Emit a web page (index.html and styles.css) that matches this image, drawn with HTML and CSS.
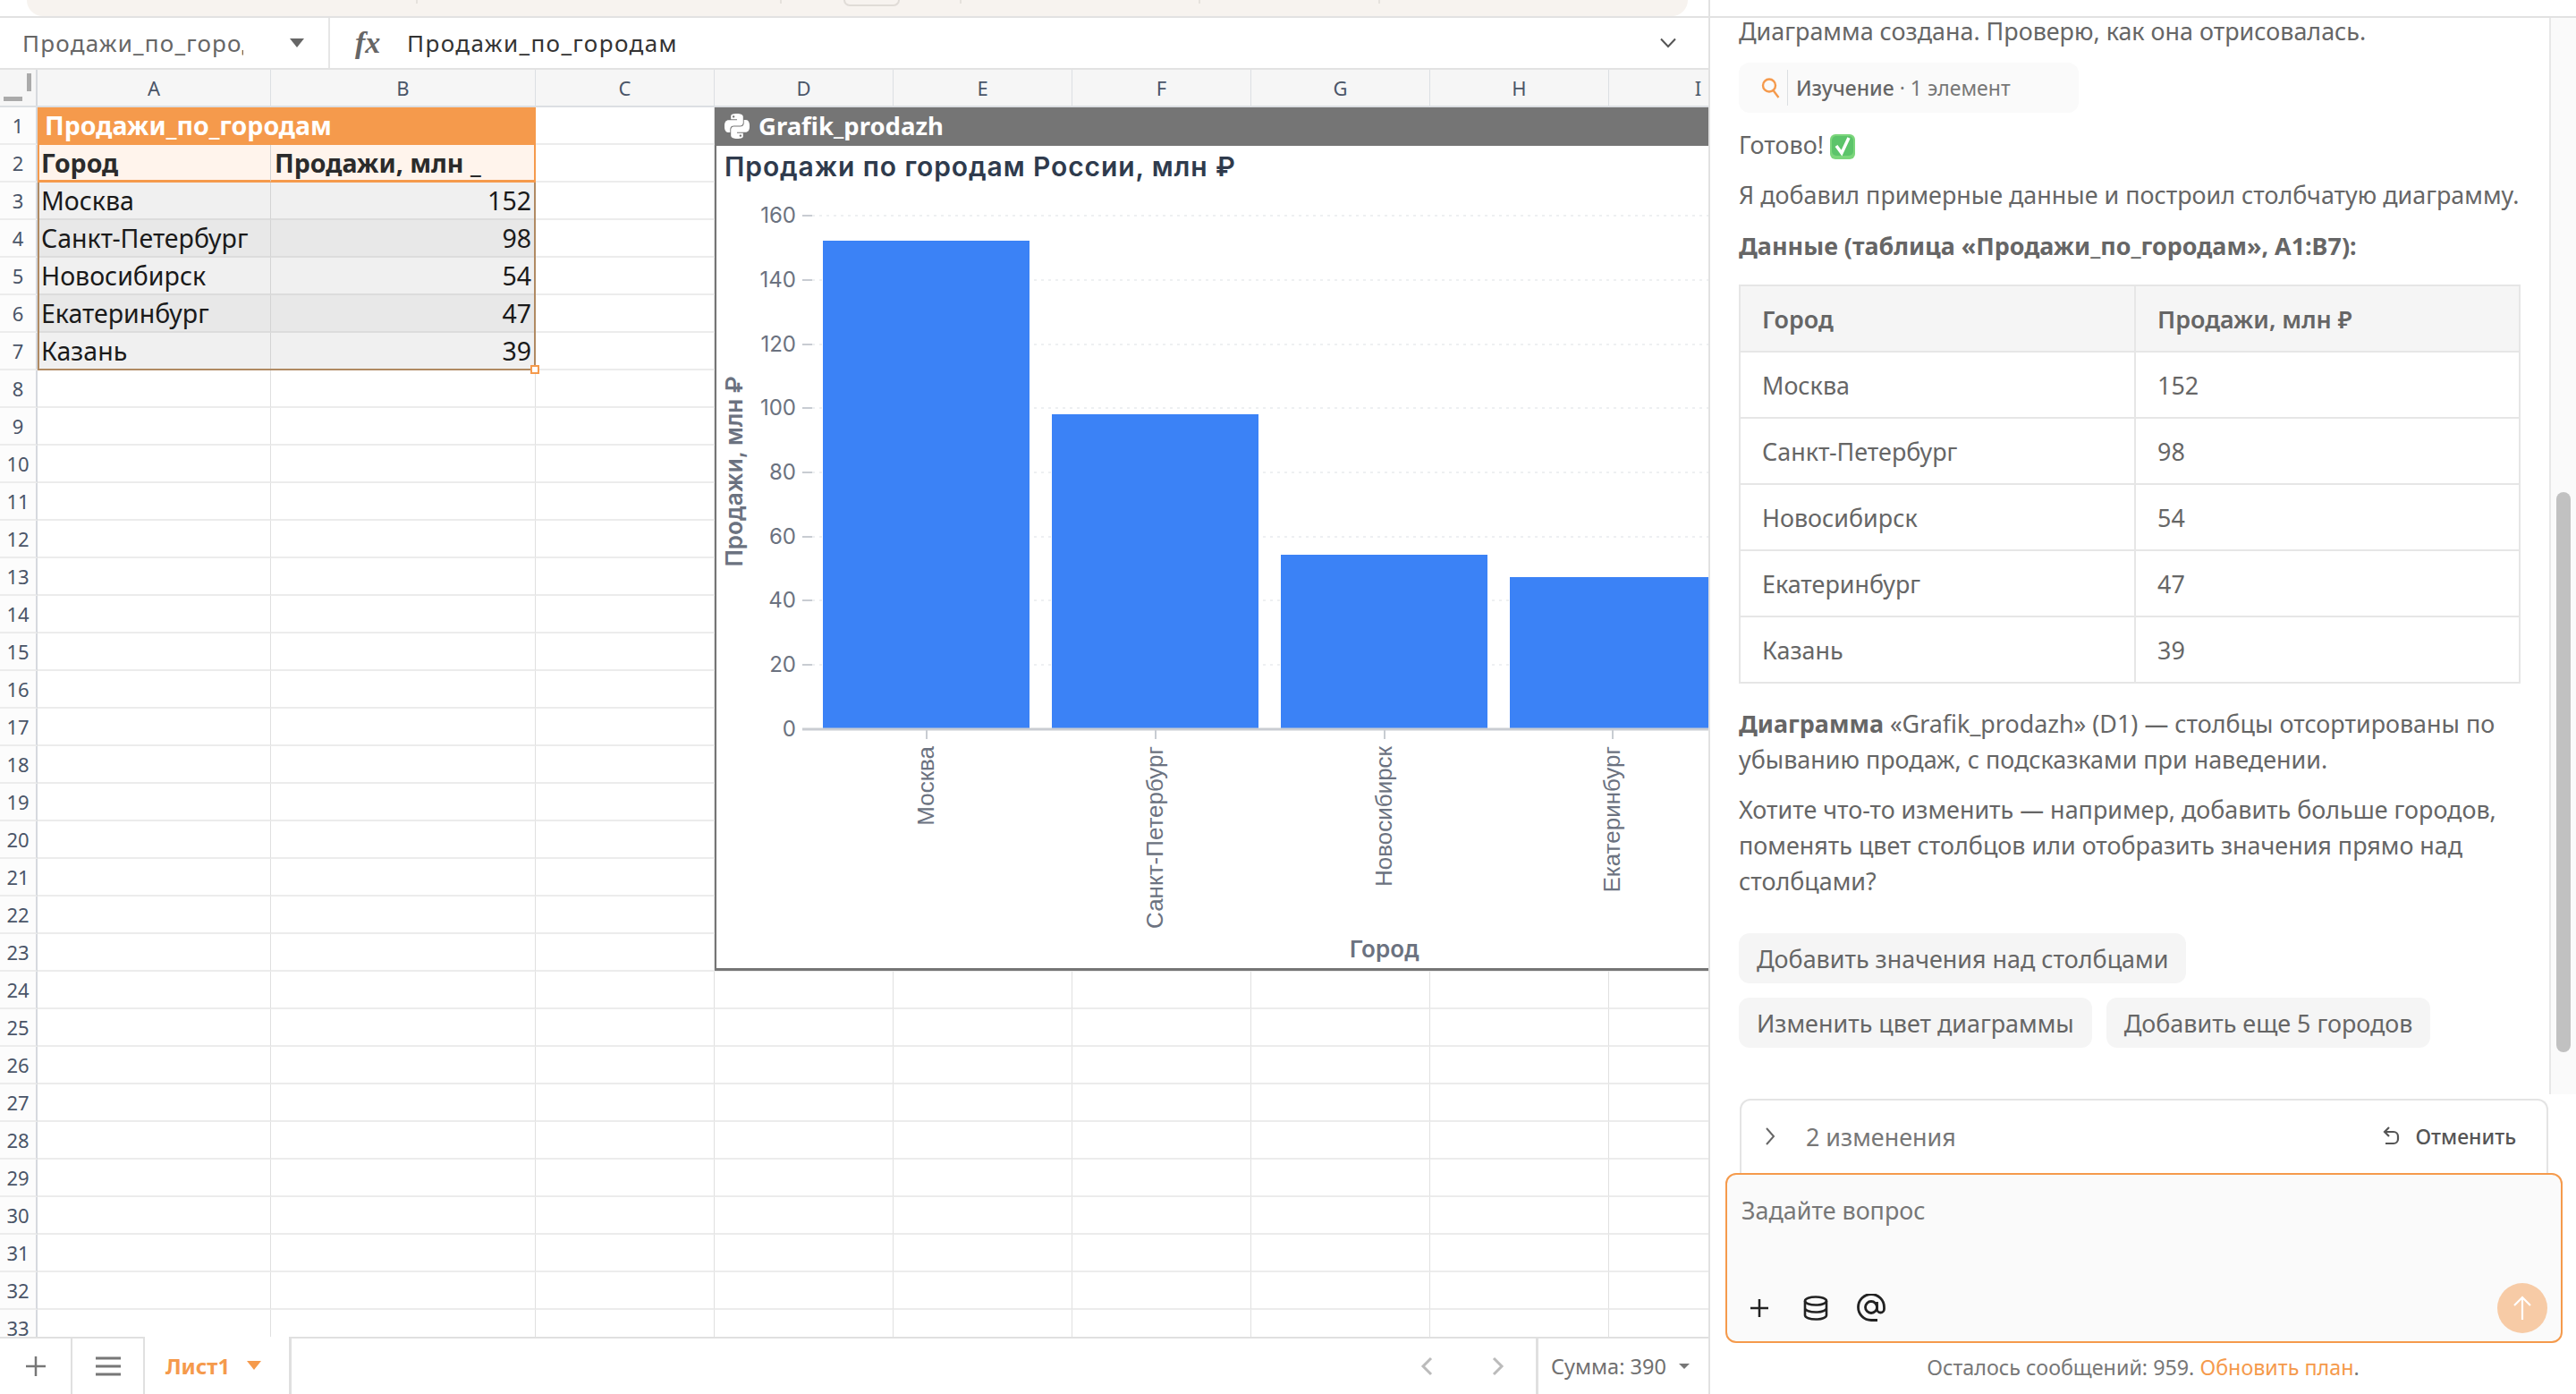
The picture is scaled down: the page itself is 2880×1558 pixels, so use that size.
FILE: index.html
```html
<!DOCTYPE html>
<html lang="ru">
<head>
<meta charset="utf-8">
<title>Продажи по городам</title>
<link rel="stylesheet" href="styles.css">
</head>
<body>
<div class="app">
  <main class="sheet">
    <div class="topband">
      <div class="strip">
        <div class="tick t1"></div>
        <div class="tick t2"></div>
        <div class="tick t3"><span class="stub"></span></div>
        <div class="tick t4"></div>
        <div class="tick t5"></div>
        <div class="tick t6"></div>
      </div>
    </div>
    <div class="formula">
      <div class="namebox">
        <span class="nametext">Продажи_по_городам</span>
        <span class="caret"></span>
      </div>
      <div class="fxbar">
        <span class="fx">fx</span>
        <span class="fxtext">Продажи_по_городам</span>
        <svg class="fxchev" viewBox="0 0 20 12" width="20" height="12"><path d="M2 1.500 10 10l8-8.500" fill="none" stroke="#555" stroke-width="2"/></svg>
      </div>
    </div>
    <div class="colhead">
      <div class="corner"><span class="cbar-h"></span><span class="cbar-v"></span></div>
      <div class="ch">A</div><div class="ch">B</div><div class="ch">C</div><div class="ch">D</div><div class="ch">E</div><div class="ch">F</div><div class="ch">G</div><div class="ch">H</div><div class="ch">I</div>
    </div>
    <div class="gridwrap">
      <div class="row"><div class="rh">1</div><div class="c title">Продажи_по_городам</div><i></i><i></i><i></i><i></i><i></i><i></i><i></i></div>
      <div class="row"><div class="rh">2</div><div class="c thead">Город</div><div class="c thead">Продажи, млн _</div><i></i><i></i><i></i><i></i><i></i><i></i><i></i></div>
      <div class="row"><div class="rh">3</div><div class="c odd">Москва</div><div class="c odd num">152</div><i></i><i></i><i></i><i></i><i></i><i></i><i></i></div>
      <div class="row"><div class="rh">4</div><div class="c even">Санкт-Петербург</div><div class="c even num">98</div><i></i><i></i><i></i><i></i><i></i><i></i><i></i></div>
      <div class="row"><div class="rh">5</div><div class="c odd">Новосибирск</div><div class="c odd num">54</div><i></i><i></i><i></i><i></i><i></i><i></i><i></i></div>
      <div class="row"><div class="rh">6</div><div class="c even">Екатеринбург</div><div class="c even num">47</div><i></i><i></i><i></i><i></i><i></i><i></i><i></i></div>
      <div class="row"><div class="rh">7</div><div class="c odd">Казань</div><div class="c odd num">39</div><i></i><i></i><i></i><i></i><i></i><i></i><i></i></div>
      <div class="row"><div class="rh">8</div><i></i><i></i><i></i><i></i><i></i><i></i><i></i><i></i><i></i></div>
      <div class="row"><div class="rh">9</div><i></i><i></i><i></i><i></i><i></i><i></i><i></i><i></i><i></i></div>
      <div class="row"><div class="rh">10</div><i></i><i></i><i></i><i></i><i></i><i></i><i></i><i></i><i></i></div>
      <div class="row"><div class="rh">11</div><i></i><i></i><i></i><i></i><i></i><i></i><i></i><i></i><i></i></div>
      <div class="row"><div class="rh">12</div><i></i><i></i><i></i><i></i><i></i><i></i><i></i><i></i><i></i></div>
      <div class="row"><div class="rh">13</div><i></i><i></i><i></i><i></i><i></i><i></i><i></i><i></i><i></i></div>
      <div class="row"><div class="rh">14</div><i></i><i></i><i></i><i></i><i></i><i></i><i></i><i></i><i></i></div>
      <div class="row"><div class="rh">15</div><i></i><i></i><i></i><i></i><i></i><i></i><i></i><i></i><i></i></div>
      <div class="row"><div class="rh">16</div><i></i><i></i><i></i><i></i><i></i><i></i><i></i><i></i><i></i></div>
      <div class="row"><div class="rh">17</div><i></i><i></i><i></i><i></i><i></i><i></i><i></i><i></i><i></i></div>
      <div class="row"><div class="rh">18</div><i></i><i></i><i></i><i></i><i></i><i></i><i></i><i></i><i></i></div>
      <div class="row"><div class="rh">19</div><i></i><i></i><i></i><i></i><i></i><i></i><i></i><i></i><i></i></div>
      <div class="row"><div class="rh">20</div><i></i><i></i><i></i><i></i><i></i><i></i><i></i><i></i><i></i></div>
      <div class="row"><div class="rh">21</div><i></i><i></i><i></i><i></i><i></i><i></i><i></i><i></i><i></i></div>
      <div class="row"><div class="rh">22</div><i></i><i></i><i></i><i></i><i></i><i></i><i></i><i></i><i></i></div>
      <div class="row"><div class="rh">23</div><i></i><i></i><i></i><i></i><i></i><i></i><i></i><i></i><i></i></div>
      <div class="row"><div class="rh">24</div><i></i><i></i><i></i><i></i><i></i><i></i><i></i><i></i><i></i></div>
      <div class="row"><div class="rh">25</div><i></i><i></i><i></i><i></i><i></i><i></i><i></i><i></i><i></i></div>
      <div class="row"><div class="rh">26</div><i></i><i></i><i></i><i></i><i></i><i></i><i></i><i></i><i></i></div>
      <div class="row"><div class="rh">27</div><i></i><i></i><i></i><i></i><i></i><i></i><i></i><i></i><i></i></div>
      <div class="row"><div class="rh">28</div><i></i><i></i><i></i><i></i><i></i><i></i><i></i><i></i><i></i></div>
      <div class="row"><div class="rh">29</div><i></i><i></i><i></i><i></i><i></i><i></i><i></i><i></i><i></i></div>
      <div class="row"><div class="rh">30</div><i></i><i></i><i></i><i></i><i></i><i></i><i></i><i></i><i></i></div>
      <div class="row"><div class="rh">31</div><i></i><i></i><i></i><i></i><i></i><i></i><i></i><i></i><i></i></div>
      <div class="row"><div class="rh">32</div><i></i><i></i><i></i><i></i><i></i><i></i><i></i><i></i><i></i></div>
      <div class="row"><div class="rh">33</div><i></i><i></i><i></i><i></i><i></i><i></i><i></i><i></i><i></i></div>

      <div class="selection"><span class="handle"></span></div>

      <section class="chart">
        <header class="chart-head">
          <svg viewBox="0 0 24 24" width="28" height="28"><path fill="#fff" d="M14.25.18l.9.2.73.26.59.3.45.32.34.34.25.34.16.33.1.3.04.26.02.2-.01.13V8.5l-.05.63-.13.55-.21.46-.26.38-.3.31-.33.25-.35.19-.35.14-.33.1-.3.07-.26.04-.21.02H8.77l-.69.05-.59.14-.5.22-.41.27-.33.32-.27.35-.2.36-.15.37-.1.35-.07.32-.04.27-.02.21v3.06H3.17l-.21-.03-.28-.07-.32-.12-.35-.18-.36-.26-.36-.36-.35-.46-.32-.59-.28-.73-.21-.88-.14-1.05-.05-1.23.06-1.22.16-1.04.24-.87.32-.71.36-.57.4-.44.42-.33.42-.24.4-.16.36-.1.32-.05.24-.01h.16l.06.01h8.16v-.83H6.18l-.01-2.75-.02-.37.05-.34.11-.31.17-.28.25-.26.31-.23.38-.2.44-.18.51-.15.58-.12.64-.1.71-.06.77-.04.84-.02 1.27.05zm-6.3 1.98l-.23.33-.08.41.08.41.23.34.33.22.41.09.41-.09.33-.22.23-.34.08-.41-.08-.41-.23-.33-.33-.22-.41-.09-.41.09zm13.09 3.95l.28.06.32.12.35.18.36.27.36.35.35.47.32.59.28.73.21.88.14 1.04.05 1.23-.06 1.23-.16 1.04-.24.86-.32.71-.36.57-.4.45-.42.33-.42.24-.4.16-.36.09-.32.05-.24.02-.16-.01h-8.22v.82h5.84l.01 2.76.02.36-.05.34-.11.31-.17.29-.25.25-.31.24-.38.2-.44.17-.51.15-.58.13-.64.09-.71.07-.77.04-.84.01-1.27-.04-1.07-.14-.9-.2-.73-.25-.59-.3-.45-.33-.34-.34-.25-.34-.16-.33-.1-.3-.04-.25-.02-.2.01-.13v-5.34l.05-.64.13-.54.21-.46.26-.38.3-.32.33-.24.35-.2.35-.14.33-.1.3-.06.26-.04.21-.02.13-.01h5.84l.69-.05.59-.14.5-.21.41-.28.33-.32.27-.35.2-.36.15-.36.1-.35.07-.32.04-.28.02-.21V6.07h2.09l.14.01zm-6.47 14.25l-.23.33-.08.41.08.41.23.33.33.23.41.08.41-.08.33-.23.23-.33.08-.41-.08-.41-.23-.33-.33-.23-.41-.08-.41.08z"/></svg>
          <span>Grafik_prodazh</span>
        </header>
        <svg class="plot" viewBox="801 163 1109 919" width="1109" height="919">
          <text class="ctitle" x="810" y="197">Продажи по городам России, млн ₽</text>
          <g class="grid">
            <path d="M908 241H1910M908 313H1910M908 385H1910M908 456H1910M908 528H1910M908 600H1910M908 671H1910M908 743H1910"/>
          </g>
          <g class="bars">
            <rect x="920" y="269" width="231" height="545"/>
            <rect x="1176" y="463" width="231" height="351"/>
            <rect x="1432" y="620" width="231" height="194"/>
            <rect x="1688" y="645" width="231" height="169"/>
          </g>
          <path class="ticks" d="M897 241H908M897 313H908M897 385H908M897 456H908M897 528H908M897 600H908M897 671H908M897 743H908M1036 816V826M1292 816V826M1548 816V826M1803 816V826"/>
          <path class="axis" d="M897 815H1910"/>
          <g class="ylab">
            <text x="890" y="249">160</text><text x="890" y="321">140</text><text x="890" y="393">120</text><text x="890" y="464">100</text><text x="890" y="536">80</text><text x="890" y="608">60</text><text x="890" y="679">40</text><text x="890" y="751">20</text><text x="890" y="823">0</text>
          </g>
          <g class="xlab">
            <text transform="translate(1044 834) rotate(-90)">Москва</text>
            <text transform="translate(1300 834) rotate(-90)">Санкт-Петербург</text>
            <text transform="translate(1556 834) rotate(-90)">Новосибирск</text>
            <text transform="translate(1811 834) rotate(-90)">Екатеринбург</text>
          </g>
          <text class="atitle" transform="translate(830 527) rotate(-90)">Продажи, млн ₽</text>
          <text class="atitle" x="1548" y="1070">Город</text>
        </svg>
      </section>
    </div>
    <footer class="tabs">
      <div class="tbtn bordered"><svg viewBox="0 0 24 24" width="24" height="24"><path d="M12 1v22M1 12h22" stroke="#777" stroke-width="2.500" fill="none"/></svg></div>
      <div class="tbtn bordered"><svg viewBox="0 0 28 24" width="28" height="24"><path d="M0 3h28M0 12h28M0 21h28" stroke="#777" stroke-width="3" fill="none"/></svg></div>
      <div class="tab"><span>Лист1</span><span class="tcaret"></span></div>
      <div class="tabfill">
        <svg class="pager" viewBox="0 0 14 22" width="14" height="22"><path d="M12 2 3 11l9 9" fill="none" stroke="#bbb" stroke-width="3"/></svg>
        <svg class="pager next" viewBox="0 0 14 22" width="14" height="22"><path d="m2 2 9 9-9 9" fill="none" stroke="#bbb" stroke-width="3"/></svg>
      </div>
      <div class="sum"><span>Сумма: 390</span><span class="scaret"></span></div>
    </footer>
  </main>

  <aside class="panel">
    <div class="ptop"></div>
    <div class="pbody">
      <div class="msgs">
        <p class="m1">Диаграмма создана. Проверю, как она отрисовалась.</p>
        <div class="tool">
          <svg viewBox="0 0 24 24" width="24" height="24"><circle cx="10" cy="9.500" r="7" fill="none" stroke="#f59a4c" stroke-width="2.400"/><path d="m14.500 15 6 8" stroke="#f59a4c" stroke-width="2.400" fill="none"/></svg>
          <span><b>Изучение</b> · 1 элемент</span>
        </div>
        <p class="m2">Готово! <svg class="check" viewBox="0 0 28 28" width="28" height="28"><rect width="28" height="28" rx="6" fill="#7bd67b"/><rect x="2" y="2" width="24" height="22" rx="5" fill="#5cc46a"/><path d="m7 13 6 8 8-17" fill="none" stroke="#fff" stroke-width="3.500"/></svg></p>
        <p class="m2">Я добавил примерные данные и построил столбчатую диаграмму.</p>
        <p class="m3"><strong>Данные (таблица «Продажи_по_городам», A1:B7):</strong></p>
        <table class="dt">
          <thead><tr><th>Город</th><th>Продажи, млн ₽</th></tr></thead>
          <tbody>
            <tr><td>Москва</td><td>152</td></tr>
            <tr><td>Санкт-Петербург</td><td>98</td></tr>
            <tr><td>Новосибирск</td><td>54</td></tr>
            <tr><td>Екатеринбург</td><td>47</td></tr>
            <tr><td>Казань</td><td>39</td></tr>
          </tbody>
        </table>
        <p class="m4"><strong>Диаграмма</strong> «Grafik_prodazh» (D1) — столбцы отсортированы по убыванию продаж, с подсказками при наведении.</p>
        <p class="m2">Хотите что-то изменить — например, добавить больше городов, поменять цвет столбцов или отобразить значения прямо над столбцами?</p>
        <div class="sugg">
          <button class="sg">Добавить значения над столбцами</button>
          <button class="sg">Изменить цвет диаграммы</button>
          <button class="sg">Добавить еще 5 городов</button>
        </div>
      </div>
      <div class="track"><span class="thumb"></span></div>
    </div>
    <div class="changes">
      <svg viewBox="0 0 12 22" width="12" height="22"><path d="m2 2 8 9-8 9" fill="none" stroke="#666" stroke-width="2"/></svg>
      <span class="chcount">2 изменения</span>
      <svg class="undo" viewBox="0 0 20 24" width="20" height="24"><path d="M8 2 3 7l5 5M3 7h10a5 5 0 0 1 5 5v3a5 5 0 0 1-5 5H4" fill="none" stroke="#555" stroke-width="2.200"/></svg>
      <span class="revert">Отменить</span>
    </div>
    <div class="input">
      <div class="ph">Задайте вопрос</div>
      <div class="inbar">
        <svg viewBox="0 0 20 20" width="20" height="20"><path d="M10 0v20M0 10h20" stroke="#222" stroke-width="2.500" fill="none"/></svg>
        <svg class="db" viewBox="0 0 28 28" width="28" height="28"><g fill="none" stroke="#222" stroke-width="2.600"><ellipse cx="14" cy="6" rx="12" ry="4.500"/><path d="M2 6v16c0 2.500 5.400 4.500 12 4.500S26 24.500 26 22V6M2 14c0 2.500 5.400 4.500 12 4.500S26 16.500 26 14"/></g></svg>
        <svg class="at" viewBox="0 0 32 32" width="32" height="32"><g fill="none" stroke="#222" stroke-width="2.800"><circle cx="16" cy="15" r="6.500"/><path d="M22.500 9v8a4 4 0 0 0 8 0v-2A14.500 14.500 0 1 0 16 29.500h7"/></g></svg>
        <span class="send"><svg viewBox="0 0 24 28" width="24" height="28"><path d="M12 27V2M3 11l9-9 9 9" fill="none" stroke="#fff" stroke-width="2.200"/></svg></span>
      </div>
    </div>
    <div class="quota">Осталось сообщений: 959. <a>Обновить план</a>.</div>
  </aside>
</div>
</body>
</html>
```

FILE: styles.css
```css
* { box-sizing: border-box; }
html, body { margin: 0; padding: 0; height: 100%; background: #fff; overflow: hidden; }
.app { display: flex; width: 2880px; height: 1558px; font-family: "Noto Sans", sans-serif; }

.sheet { width: 1910px; display: flex; flex-direction: column; flex: none; position: relative; }

.topband { height: 20px; border-bottom: 2px solid #e2e2e2; padding: 0 23px 0 30px; flex: none; }
.strip { height: 18px; background: #f7f3ef; border-radius: 0 0 40px 40px; display: grid; grid-template-columns: 435px 407px 201px 267px 201px 203px 1fr; }
.tick { height: 4px; border-left: 2px solid #e6e2dd; }
.t1 { border-left: 0; }
.stub { display: block; margin-left: 69px; width: 63px; height: 7px; border: 2px solid #e0dcd7; border-top: 0; border-radius: 0 0 8px 8px; }

.formula { height: 58px; border-bottom: 2px solid #e2e2e2; display: flex; flex: none; }
.namebox { width: 369px; border-right: 2px solid #e6e6e6; display: flex; align-items: center; padding-left: 25px; flex: none; }
.nametext { width: 247px; overflow: hidden; white-space: nowrap; font-size: 26px; color: #666; letter-spacing: 1.200px; }
.caret { margin-left: 52px; border: 8px solid transparent; border-top: 10px solid #666; border-bottom: 0; }
.fxbar { flex: 1; display: flex; align-items: center; padding-left: 28px; }
.fx { font-family: "Liberation Serif", serif; font-style: italic; font-weight: 700; font-size: 34px; color: #666; width: 58px; }
.fxtext { font-size: 26px; color: #333; letter-spacing: 1.400px; }
.fxchev { margin-left: auto; margin-right: 35px; }

.colhead, .row { display: grid; grid-template-columns: 42px 261px 296px repeat(7, 200px); flex: none; }
.colhead { height: 42px; background: #f6f6f6; border-bottom: 2px solid #dcdfe3; }
.corner { position: relative; border-right: 2px solid #d6d9de; display: block; }
.cbar-h { position: absolute; left: 4px; top: 30px; width: 21px; height: 5px; background: #aaa; }
.cbar-v { position: absolute; left: 30px; top: 4px; width: 5px; height: 20px; background: #aaa; }
.ch { display: flex; align-items: center; justify-content: center; font-size: 22px; color: #4a5568; border-right: 1px solid #dcdfe3; }

.gridwrap { flex: 1; position: relative; overflow: hidden; min-height: 0; }
.row { height: 42px; }
.row > i { display: block; border-right: 1px solid #e0e0e0; border-bottom: 2px solid #ececec; }
.rh { display: flex; align-items: center; justify-content: center; font-size: 22px; color: #4a5568; border-right: 2px solid #d6d9de; border-bottom: 2px solid #ececec; background: #fcfcfc; }
.c { display: flex; align-items: center; padding: 0 4px; font-size: 28.500px; color: #1a1a1a; white-space: nowrap; border-right: 1px solid #d4d4d4; border-bottom: 2px solid #dcdcdc; }
.title { grid-column: span 2; background: #f59a4c; color: #fff; font-weight: 700; padding-left: 8px; border: 0; border-bottom: 2px solid #f59a4c; }
.thead { background: #fff4ec; font-weight: 700; color: #2b2b2b; border-bottom: 3px solid #f59a4c; }
.thead:nth-child(2) { border-left: 2px solid #f59a4c; padding-left: 2px; }
.thead:nth-child(3) { border-right: 2px solid #f59a4c; }
.odd { background: #f0f0f0; }
.even { background: #e8e8e8; }
.num { justify-content: flex-end; }

.selection { position: absolute; left: 42px; top: 84px; width: 557px; height: 210px; border: 2px solid #b08a63; border-top: 0; pointer-events: none; }
.handle { position: absolute; right: -6px; bottom: -6px; width: 10px; height: 10px; background: #fff; border: 2px solid #f59a4c; }

.chart { position: absolute; left: 799px; top: 0; width: 1111px; height: 965px; background: #fff; border-left: 2px solid #757575; border-bottom: 3px solid #757575; display: flex; flex-direction: column; overflow: hidden; }
.chart-head { height: 43px; background: #757575; color: #fff; display: flex; align-items: center; gap: 10px; padding: 0 0 2px 9px; font-weight: 700; font-size: 27.500px; flex: none; }
.plot { display: block; flex: none; }
.ctitle { font-family: Inter, sans-serif; font-weight: 600; font-size: 30px; letter-spacing: .9px; fill: #2f3b4d; }
.grid path { stroke: #eef0f2; stroke-width: 2; stroke-dasharray: 3 5; fill: none; }
.bars rect { fill: #3b82f6; }
.ticks { stroke: #c8ccd2; stroke-width: 2; fill: none; }
.axis { stroke: #cacdd2; stroke-width: 3; fill: none; }
.ylab text { font-family: Inter, sans-serif; font-size: 24px; fill: #6b7280; text-anchor: end; }
.xlab text { font-family: "Liberation Sans", sans-serif; font-size: 26px; fill: #6b7280; text-anchor: end; }
.atitle { font-family: Inter, sans-serif; font-weight: 600; font-size: 26px; fill: #6b7280; text-anchor: middle; }

.tabs { height: 64px; display: flex; flex: none; background: #fff; position: relative; }
.tbtn { width: 81px; border-top: 2px solid #e0e0e0; border-right: 2px solid #e0e0e0; display: flex; align-items: center; justify-content: center; }
.tab { width: 164px; display: flex; align-items: center; padding-left: 23px; gap: 19px; color: #f59a4c; font-weight: 700; font-size: 24px; border-right: 3px solid #e0e0e0; }
.tcaret { border: 8px solid transparent; border-top: 10px solid #f59a4c; border-bottom: 0; }
.tabfill { flex: 1; border-top: 2px solid #e0e0e0; display: flex; align-items: center; justify-content: flex-end; padding-right: 35px; gap: 66px; }
.sum { width: 193px; border-top: 2px solid #e0e0e0; border-left: 3px solid #e0e0e0; display: flex; align-items: center; padding-left: 14px; gap: 14px; font-size: 23.500px; color: #707070; }
.scaret { border: 6px solid transparent; border-top: 6px solid #777; border-bottom: 0; }

.panel { width: 970px; border-left: 2px solid #e2e2e2; display: flex; flex-direction: column; flex: none; font-size: 26.900px; color: #666; }
.ptop { height: 20px; border-bottom: 2px solid #e2e2e2; flex: none; }
.pbody { height: 1208px; display: flex; flex: none; overflow: hidden; }
.msgs { width: 938px; padding: 0 0 0 32px; flex: none; }
.msgs p { margin: 0; line-height: 40px; width: 884px; }
.msgs p.m1 { line-height: 30px; }
.msgs strong { font-weight: 700; color: #666; }
.msgs p.m2 { margin-top: 16px; }
.msgs p.m3 { margin-top: 17px; }
.msgs p.m4 { margin-top: 25px; width: 873px; }
.check { vertical-align: -6px; }
.tool { width: 380px; height: 56px; margin-top: 20px; background: #fafafa; border-radius: 12px; display: flex; align-items: center; padding-left: 24px; gap: 16px; font-size: 23px; color: #777; }
.tool b { font-weight: 500; color: #666; }

.dt { width: 874px; margin-top: 23px; border-collapse: collapse; table-layout: fixed; }
.dt th, .dt td { border: 2px solid #e6e6e6; height: 74px; padding: 0 24px; text-align: left; font-weight: 400; }
.dt th { background: #f5f5f5; font-weight: 600; }
.dt th:first-child { width: 442px; }

.sugg { display: flex; flex-wrap: wrap; gap: 16px; margin-top: 38px; width: 873px; }
.sg { height: 56px; border: 0; border-radius: 12px; background: #f5f5f5; padding: 0 20px; font: inherit; color: #666; }

.track { width: 30px; height: 1203px; margin-left: auto; background: #fafafa; border-left: 2px solid #e8e8e8; position: relative; flex: none; }
.thumb { position: absolute; left: 6px; top: 530px; width: 16px; height: 626px; border-radius: 8px; background: #c1c1c1; }

.changes { height: 90px; margin: 0 31px 0 33px; padding: 0 34px 8px 26px; border: 2px solid #e4e4e4; border-bottom: 0; border-radius: 12px 12px 0 0; display: flex; align-items: center; flex: none; }
.chcount { margin-left: 34px; color: #777; }
.undo { margin-left: auto; }
.revert { margin-left: 18px; font-weight: 500; font-size: 23px; color: #555; }

.input { height: 190px; margin: -7px 15px 0 17px; background: #fafafa; border: 2px solid #f59a4c; border-radius: 12px; padding: 0 16px; display: flex; flex-direction: column; position: relative; flex: none; }
.ph { margin-top: 20px; line-height: 40px; color: #777; }
.inbar { margin-top: auto; margin-bottom: 9px; height: 56px; display: flex; align-items: center; gap: 34px; padding-left: 10px; }
.db { margin-left: 5px; }
.at { margin-left: -2px; }
.send { margin-left: auto; width: 56px; height: 56px; border-radius: 50%; background: #f7cba6; display: flex; align-items: center; justify-content: center; margin-right: -1px; }

.quota { flex: 1; display: flex; align-items: center; justify-content: center; white-space: pre; font-size: 23.300px; color: #777; padding-bottom: 4px; }
.quota a { color: #f59a4c; }
```
